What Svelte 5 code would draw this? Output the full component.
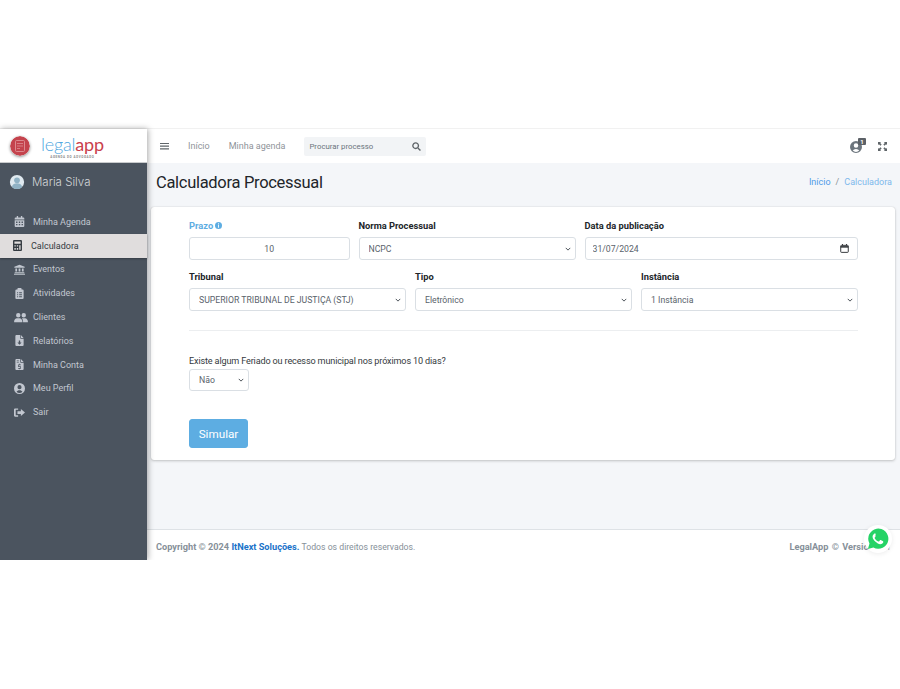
<script lang="ts">
  const menu = [
    { label: "Minha Agenda", icon: "calendar" },
    { label: "Calculadora", icon: "calculator", active: true },
    { label: "Eventos", icon: "bank" },
    { label: "Atividades", icon: "clipboard" },
    { label: "Clientes", icon: "users" },
    { label: "Relatórios", icon: "filedown" },
    { label: "Minha Conta", icon: "invoice" },
    { label: "Meu Perfil", icon: "user" },
    { label: "Sair", icon: "signout" }
  ];
</script>

{#snippet icon(name)}
  <svg class="nav-icon" class:wide={name === "users"} viewBox={name === "users" ? "0 0 20 16" : "0 0 16 16"} fill="currentColor">
    {#if name === "calendar"}
      <path fill-rule="evenodd" d="M4 0h2v2h4V0h2v2h1.500A1.500 1.500 0 0 1 15 3.500V5H1V3.500A1.500 1.500 0 0 1 2.500 2H4zM1 6h14v8.500a1.500 1.500 0 0 1-1.500 1.500h-11A1.500 1.500 0 0 1 1 14.500zm2 2v2h2V8zm4 0v2h2V8zm4 0v2h2V8zm-8 3.500v2h2v-2zm4 0v2h2v-2zm4 0v2h2v-2z" />
    {:else if name === "calculator"}
      <path fill-rule="evenodd" d="M3 0h10a1.500 1.500 0 0 1 1.500 1.500v13A1.500 1.500 0 0 1 13 16H3a1.500 1.500 0 0 1-1.500-1.500v-13A1.500 1.500 0 0 1 3 0zm.5 2v3.500h9V2zm0 5.500v2h2v-2zm3.500 0v2h2v-2zm3.500 0V14h2V7.500zM3.500 11.500V14h2v-2.500zm3.500 0V14h2v-2.500z" />
    {:else if name === "bank"}
      <path d="M8 1l7.500 3v1.500h-15V4zM2 6.500h2.500V11H2zm4.700 0h2.600V11H6.700zm4.800 0H14V11h-2.500zM1 12h14v1.500H1zm-1 2h16v1.500H0z" />
    {:else if name === "clipboard"}
      <path fill-rule="evenodd" d="M6 0h4a1 1 0 0 1 1 1v1h1.500A1.500 1.500 0 0 1 14 3.500v11a1.500 1.500 0 0 1-1.500 1.500h-9A1.500 1.500 0 0 1 2 14.500v-11A1.500 1.500 0 0 1 3.500 2H5V1a1 1 0 0 1 1-1zM4.500 6v1.500H6V6zm3 0v1.500h4V6zm-3 3v1.500H6V9zm3 0v1.500h4V9zm-3 3v1.500H6V12zm3 0v1.500h4V12z" />
    {:else if name === "users"}
      <path d="M6 1.500a3.200 3.200 0 1 1 0 6.400 3.200 3.200 0 0 1 0-6.400zm8 0a3.200 3.200 0 1 1 0 6.400 3.200 3.200 0 0 1 0-6.400zM0 13.500C0 11 2 9 4 9h4c2 0 4 2 4 4.500V15H0zm13 1.500v-1.500c0-1.700-.6-3.300-1.700-4.500H16c2 0 4 2 4 4.500V15z" />
    {:else if name === "filedown"}
      <path fill-rule="evenodd" d="M3 0h6v4.500A1 1 0 0 0 10 5.500h4v9A1.500 1.500 0 0 1 12.500 16h-9A1.500 1.500 0 0 1 2 14.500v-13A1.500 1.500 0 0 1 3 0zm4 8v3H5l3 3 3-3H9V8zM10 0l4 4.500h-4z" />
    {:else if name === "invoice"}
      <path fill-rule="evenodd" d="M3 0h6v4.500A1 1 0 0 0 10 5.500h4v9A1.500 1.500 0 0 1 12.500 16h-9A1.500 1.500 0 0 1 2 14.500v-13A1.500 1.500 0 0 1 3 0zm1 2v1h3V2zm0 2v1h3V4zm3.500 3v1H6v3.500h3V13H6v1h1.500v1h1v-1H10v-3.500H7V9h3V8H8.500V7zM10 0l4 4.500h-4z" />
    {:else if name === "user"}
      <path fill-rule="evenodd" d="M8 0a8 8 0 1 1 0 16A8 8 0 0 1 8 0zm0 3a3 3 0 1 0 0 6 3 3 0 0 0 0-6zm0 7.500c-2 0-3.500 1-4.300 2.300a6 6 0 0 0 8.600 0C11.500 11.500 10 10.500 8 10.500z" />
    {:else}
      <path d="M10 3l6 5-6 5v-3H5V6h5zM1.500 2H6v2H2.500v8H6v2H1.500A1.500 1.500 0 0 1 0 12.500v-9A1.500 1.500 0 0 1 1.500 2z" />
    {/if}
  </svg>
{/snippet}

<div class="app">
  <aside class="sidebar">
    <div class="brand">
      <svg class="brand-seal" viewBox="0 0 20 20">
        <circle cx="10" cy="10" r="10" fill="#c4434d" />
        <rect x="5.500" y="4.500" width="9" height="11" rx="1" fill="none" stroke="#e39a9f" stroke-width="0.800" />
        <path d="M7 7.500h6M7 10h6M7 12.500h3" stroke="#e39a9f" stroke-width="0.700" />
      </svg>
      <div class="brand-text">
        <div class="brand-name"><span class="legal">legal</span><span class="appname">app</span></div>
        <div class="brand-sub">AGENDA DO ADVOGADO</div>
      </div>
    </div>
    <div class="user">
      <svg class="avatar" viewBox="0 0 18 18">
        <circle cx="9" cy="9" r="8" fill="#dfe9ef" />
        <circle cx="9" cy="7" r="3.200" fill="#8fb1c4" />
        <path d="M3.200 14.500c1-3 3.200-4 5.800-4s4.800 1 5.800 4A8 8 0 0 1 9 17a8 8 0 0 1-5.800-2.500z" fill="#8fb1c4" />
      </svg>
      <span class="user-name">Maria Silva</span>
    </div>
    <nav class="menu">
      {#each menu as item}
        <div class="menu-item" class:active={item.active}>
          {@render icon(item.icon)}
          <span>{item.label}</span>
        </div>
      {/each}
    </nav>
  </aside>

  <div class="wrapper">
    <header class="navbar">
      <svg class="burger" viewBox="0 0 10 9" fill="#5f6569">
        <path d="M0 0.500h10v1.300H0zm0 3h10v1.300H0zm0 3h10v1.300H0z" />
      </svg>
      <span class="nav-link first">Início</span>
      <span class="nav-link">Minha agenda</span>
      <div class="search">
        <span>Procurar processo</span>
        <svg viewBox="0 0 16 16" width="9" height="9" fill="none" stroke="#5f6569" stroke-width="2.400">
          <circle cx="6.500" cy="6.500" r="5" />
          <path d="M10.500 10.500l4.500 4.500" />
        </svg>
      </div>
      <div class="nav-right">
        <div class="bell">
          <svg viewBox="0 0 16 16" width="12" height="12" fill="#6c757d">
            <path fill-rule="evenodd" d="M8 0a8 8 0 1 1 0 16A8 8 0 0 1 8 0zm0 3a3 3 0 1 0 0 6 3 3 0 0 0 0-6zm0 7.500c-2 0-3.500 1-4.300 2.300a6 6 0 0 0 8.600 0C11.500 11.500 10 10.500 8 10.500z" />
          </svg>
          <span class="badge">1</span>
        </div>
        <svg viewBox="0 0 16 16" width="9" height="9" fill="#5f6569">
          <path d="M0 0h5.500L3.800 1.700 6.500 4.400 4.400 6.500 1.700 3.800 0 5.500zm16 0v5.500l-1.700-1.700-2.700 2.700-2.100-2.100 2.700-2.700L10.500 0zM0 16v-5.500l1.700 1.700 2.700-2.700 2.100 2.100-2.700 2.700L5.500 16zm16 0h-5.500l1.700-1.700-2.700-2.700 2.100-2.100 2.700 2.700 1.700-1.700z" />
        </svg>
      </div>
    </header>

    <main class="content">
      <div class="page-head">
        <h1>Calculadora Processual</h1>
        <div class="crumbs"><span class="crumb-a">Início</span><span class="sep">/</span><span class="crumb-b">Calculadora</span></div>
      </div>

      <section class="card">
        <div class="grid">
          <div class="field span3">
            <label class="prazo" for="prazo">Prazo
              <svg viewBox="0 0 16 16" width="7" height="7"><circle cx="8" cy="8" r="8" fill="#5dade2" /><path d="M7 3h2v2H7zm0 3.500h2V13H7z" fill="#fff" /></svg>
            </label>
            <input id="prazo" class="control center" value="10" />
          </div>
          <div class="field span4">
            <label for="norma">Norma Processual</label>
            <select id="norma" class="control"><option>NCPC</option></select>
          </div>
          <div class="field span5">
            <label for="data">Data da publicação</label>
            <div class="date-wrap">
              <input id="data" class="control" value="31/07/2024" />
              <svg class="date-icon" viewBox="0 0 10 10" fill="none" stroke="#212529">
                <rect x="0.800" y="1.500" width="8.400" height="7.800" rx="0.800" />
                <path d="M0.800 3.200h8.400" stroke-width="1.600" />
                <path d="M2.800 0v1.500M7.200 0v1.500" />
              </svg>
            </div>
          </div>
          <div class="field span4">
            <label for="tribunal">Tribunal</label>
            <select id="tribunal" class="control"><option>SUPERIOR TRIBUNAL DE JUSTIÇA (STJ)</option></select>
          </div>
          <div class="field span4">
            <label for="tipo">Tipo</label>
            <select id="tipo" class="control"><option>Eletrônico</option></select>
          </div>
          <div class="field span4">
            <label for="instancia">Instância</label>
            <select id="instancia" class="control"><option>1 Instância</option></select>
          </div>
        </div>
        <hr />
        <label class="question" for="feriado">Existe algum Feriado ou recesso municipal nos próximos 10 dias?</label>
        <select id="feriado" class="control small"><option>Não</option></select>
        <button class="btn" type="button">Simular</button>
      </section>
    </main>

    <footer class="footer">
      <div><strong>Copyright © 2024 <span class="blue">ItNext Soluções.</span></strong> Todos os direitos reservados.</div>
      <div><strong class="version">LegalApp © Version</strong> 1.1</div>
    </footer>
  </div>

  <div class="whatsapp">
    <svg viewBox="0 0 24 24" width="22" height="22">
      <path d="M1 23l1.700-6A11 11 0 1 1 7 21.300z" fill="#25d366" />
      <path d="M8.700 6c-.3 0-.9.100-1.400.7-.6.600-1.300 1.500-1.200 3.100.1 1.700 1.300 3.500 2.900 5 2 1.900 3.800 2.700 5.300 2.900 1.500.100 2.700-.6 3.200-1.500.300-.7.300-1.400.200-1.500-.1-.2-2.400-1.400-2.800-1.500-.3-.1-.6 0-.8.200l-.9 1.200c-.2.200-.5.200-.8.100-1.800-.8-3.100-2-4-3.600-.2-.3 0-.6.100-.7l.7-.9c.1-.2.100-.5 0-.7L9.500 6.600C9.300 6.100 9 6 8.700 6z" fill="#fff" />
    </svg>
  </div>
</div>

<style>
  :global(body) {
    margin: 0;
    background: #fff;
    font-family: Roboto, "Noto Sans", sans-serif;
  }
  .app {
    display: flex;
    position: relative;
    height: 432px;
    margin-top: 128px;
    border-top: 1px solid #f1f1f1;
    box-sizing: border-box;
  }
  .sidebar {
    width: 147px;
    flex: none;
    background: #4b545f;
    box-shadow: 1px 0 6px rgba(0, 0, 0, 0.35);
    position: relative;
    z-index: 2;
  }
  .brand {
    height: 34px;
    background: #fff;
    display: flex;
    align-items: center;
    padding-left: 10px;
    gap: 11px;
    border-bottom: 1px solid #c9cbcd;
    box-sizing: border-box;
  }
  .brand-seal {
    width: 20px;
    height: 20px;
    border-radius: 50%;
    box-shadow: 0 1px 3px rgba(0, 0, 0, 0.45);
  }
  .brand-text {
    display: flex;
    flex-direction: column;
    align-items: center;
  }
  .brand-name {
    font-family: Lato, sans-serif;
    font-weight: 300;
    font-size: 18px;
    line-height: 22px;
    letter-spacing: -0.2px;
  }
  .legal {
    color: #4fa6e0;
  }
  .appname {
    color: #c9404c;
    font-weight: 400;
  }
  .brand-sub {
    font-size: 3px;
    line-height: 4px;
    letter-spacing: 0.600px;
    color: #888;
    font-weight: 700;
  }
  .user {
    display: flex;
    align-items: center;
    gap: 7px;
    height: 37px;
    padding-left: 9px;
  }
  .avatar {
    width: 16px;
    height: 16px;
  }
  .user-name {
    font-family: Inter, sans-serif;
    font-size: 11.500px;
    font-weight: 300;
    color: #d3d6d9;
  }
  .menu {
    margin-top: 10px;
  }
  .menu-item {
    display: flex;
    align-items: center;
    height: 23.800px;
    padding-left: 14px;
    gap: 8px;
    color: #c2c7d0;
    font-size: 9px;
  }
  .menu-item.active {
    background: #e0dddd;
    color: #343a40;
    padding-left: 12px;
    box-shadow: 0 1px 2px rgba(0, 0, 0, 0.3);
  }
  .nav-icon {
    width: 11px;
    height: 11px;
    flex: none;
  }
  .nav-icon.wide {
    width: 14px;
    margin-right: -3px;
  }
  .wrapper {
    flex: 1;
    min-width: 0;
    display: flex;
    flex-direction: column;
    background: #f4f6f9;
  }
  .navbar {
    height: 34px;
    flex: none;
    background: #fff;
    display: flex;
    align-items: center;
    padding-left: 13px;
    box-sizing: border-box;
  }
  .burger {
    width: 9px;
    height: 9px;
  }
  .nav-link {
    font-size: 9px;
    color: #8f9499;
    margin-left: 19px;
  }
  .search {
    margin-left: 19px;
    width: 122px;
    height: 19px;
    background: #f2f4f6;
    border-radius: 2px;
    display: flex;
    align-items: center;
    justify-content: space-between;
    padding: 0 5px;
    box-sizing: border-box;
    font-size: 7.800px;
    color: #6c757d;
  }
  .nav-right {
    margin-left: auto;
    padding-right: 13px;
    display: flex;
    align-items: center;
    gap: 13px;
  }
  .bell {
    position: relative;
    display: flex;
    margin-top: 2px;
    margin-right: 3px;
  }
  .badge {
    position: absolute;
    top: -3px;
    right: -4px;
    width: 8px;
    height: 7px;
    background: #5c6167;
    border-radius: 1px;
    color: #fff;
    font-size: 6px;
    line-height: 7px;
    text-align: center;
    font-weight: 700;
  }
  .content {
    flex: 1;
    padding: 0 5px 0 4px;
  }
  .page-head {
    display: flex;
    align-items: center;
    justify-content: space-between;
    height: 44px;
    padding: 0 3px 5px 5px;
    box-sizing: border-box;
  }
  h1 {
    margin: 0;
    font-weight: 400;
    font-size: 16.500px;
    letter-spacing: -0.3px;
    color: #212529;
  }
  .crumbs {
    font-size: 9px;
    margin-top: -2px;
  }
  .crumb-a {
    color: #4f9ae8;
  }
  .crumb-b {
    color: #7db8ec;
  }
  .sep {
    color: #8a8f94;
    margin: 0 5px;
  }
  .card {
    background: #fff;
    height: 253px;
    box-sizing: border-box;
    padding: 13px 37px 0 38px;
    border-radius: 3px;
    box-shadow: 0 0 1px rgba(0, 0, 0, 0.2), 0 1px 3px rgba(0, 0, 0, 0.2);
  }
  .grid {
    display: grid;
    grid-template-columns: repeat(12, 1fr);
    column-gap: 9px;
    row-gap: 11px;
  }
  .span3 { grid-column: span 3; }
  .span4 { grid-column: span 4; }
  .span5 { grid-column: span 5; }
  .field label {
    display: block;
    font-size: 9.300px;
    font-weight: 700;
    color: #212529;
    line-height: 11px;
    margin-bottom: 6px;
  }
  .field label.prazo {
    color: #5dade2;
  }
  .control {
    display: block;
    width: 100%;
    height: 23px;
    box-sizing: border-box;
    border: 1px solid #dadfe4;
    border-radius: 3px;
    background: #fff;
    color: #5a636b;
    font-family: inherit;
    font-size: 8.700px;
    padding: 0 9px;
    outline: none;
  }
  select.control {
    appearance: none;
    background-image: url("data:image/svg+xml,%3Csvg xmlns='http://www.w3.org/2000/svg' viewBox='0 0 8 5'%3E%3Cpath d='M1 1l3 3 3-3' fill='none' stroke='%23495057' stroke-width='1.300'/%3E%3C/svg%3E");
    background-repeat: no-repeat;
    background-position: right 4px center;
    background-size: 6px 4px;
  }
  .center {
    text-align: center;
  }
  .date-wrap {
    position: relative;
  }
  .date-wrap .control {
    padding-left: 7px;
  }
  .date-icon {
    position: absolute;
    right: 9px;
    top: 7px;
    width: 9px;
    height: 9px;
  }
  hr {
    border: 0;
    border-top: 1px solid #eceef0;
    margin: 19px 0 25px;
  }
  .question {
    display: block;
    font-size: 9.100px;
    letter-spacing: -0.150px;
    line-height: 11px;
    color: #343a40;
    margin-bottom: 2px;
  }
  .small {
    width: 60px;
    height: 22px;
  }
  .btn {
    display: block;
    margin-top: 28px;
    width: 59px;
    height: 29px;
    background: #5dade2;
    border: 1px solid #5dade2;
    border-radius: 3px;
    color: #fff;
    font-family: inherit;
    font-size: 11.700px;
    padding: 0;
  }
  .footer {
    height: 31px;
    flex: none;
    background: #fff;
    border-top: 1px solid #dee2e6;
    box-sizing: border-box;
    display: flex;
    align-items: center;
    justify-content: space-between;
    padding: 2px 9px 0 9px;
    font-size: 8.700px;
    color: #869099;
  }
  .footer strong {
    font-size: 9.200px;
  }
  .footer strong.version {
    word-spacing: 1px;
    margin-right: 3px;
  }
  .blue {
    color: #1a73c9;
  }
  .whatsapp {
    position: absolute;
    right: 11px;
    bottom: 10px;
    width: 22px;
    height: 22px;
    background: #fff;
    border-radius: 50%;
    box-shadow: 0 0 0 3px #fff, 0 1px 5px 3px rgba(0, 0, 0, 0.08);
    z-index: 3;
    display: flex;
  }
</style>
